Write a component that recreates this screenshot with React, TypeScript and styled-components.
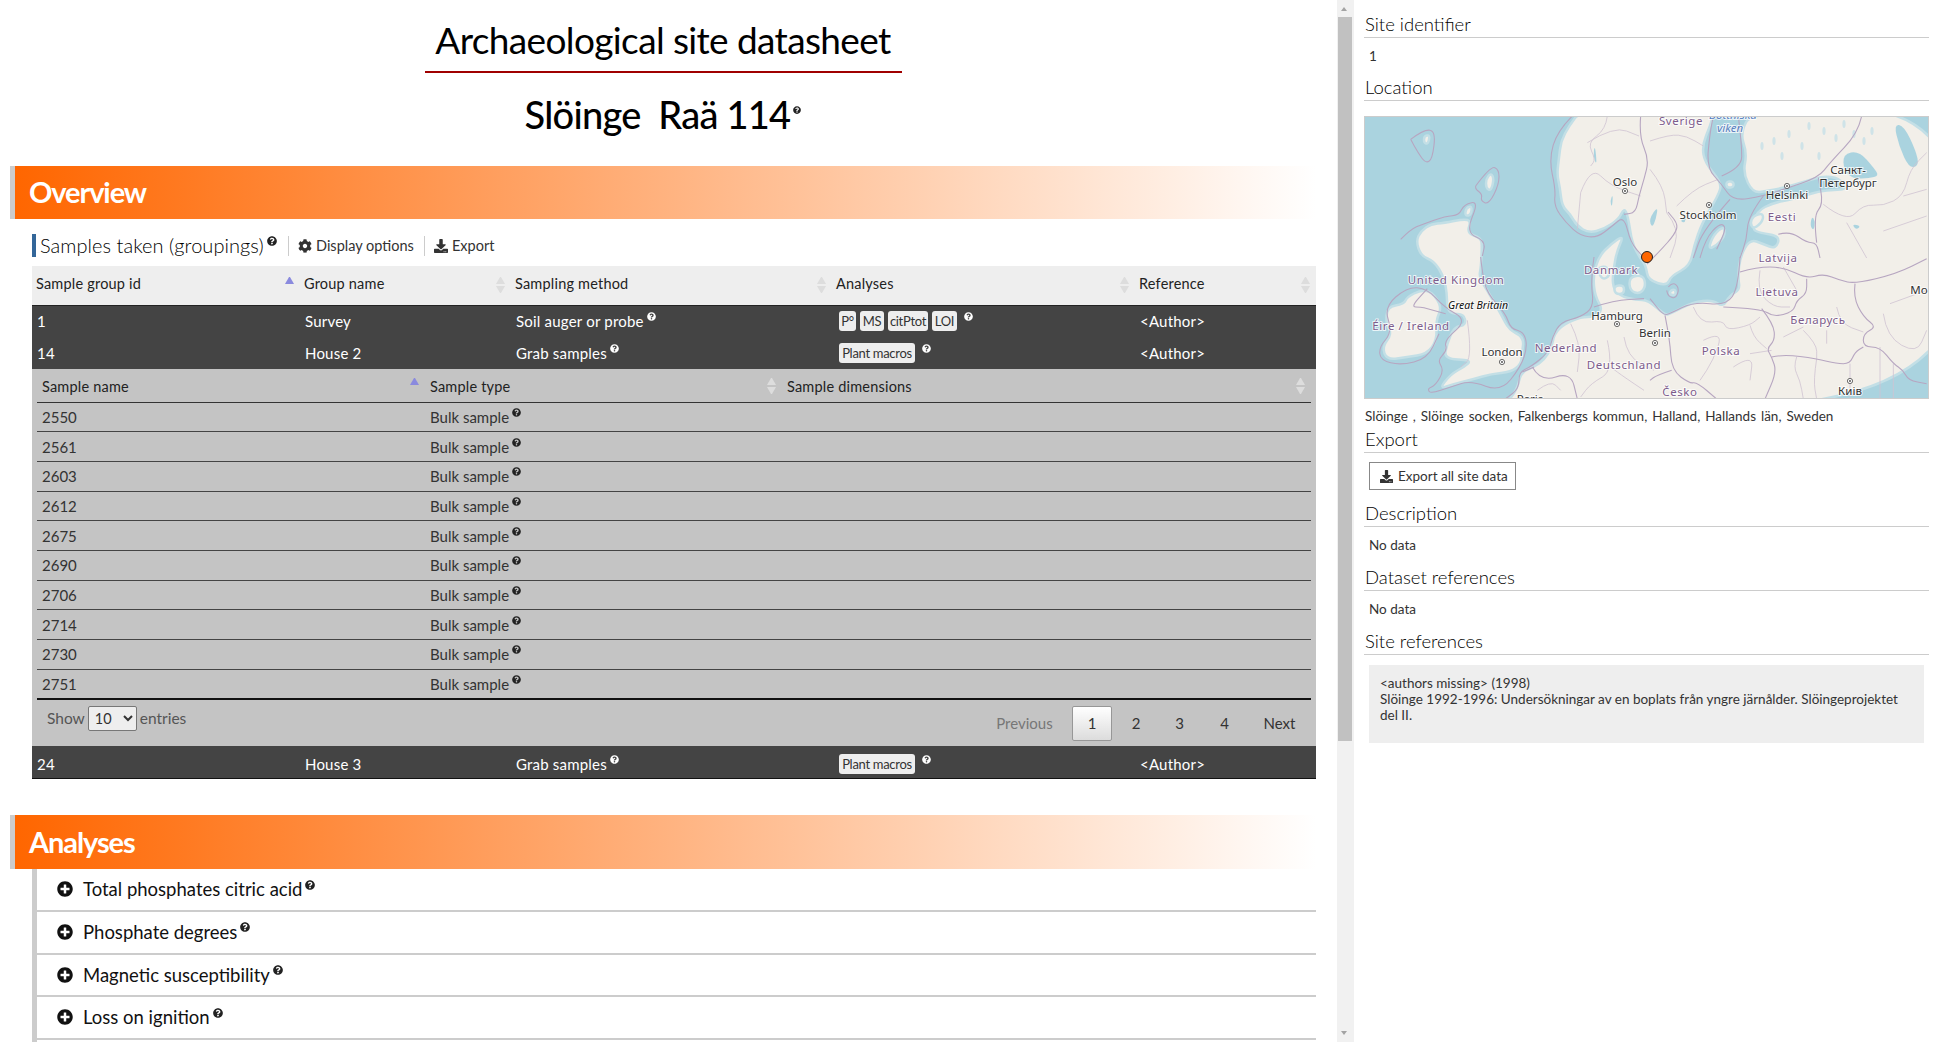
import React from "react";
import styled, { createGlobalStyle } from "styled-components";
import { FaCog, FaDownload, FaPlusCircle, FaQuestionCircle } from "react-icons/fa";

const Global = createGlobalStyle`
  html, body { margin: 0; height: 100%; overflow: hidden; background: #fff; }
  body { font-family: Lato, "Noto Sans", sans-serif; color: #333; }
  * { box-sizing: border-box; }
`;

const Page = styled.div`display: flex; height: 1042px; width: 1937px; overflow: hidden;`;
const LeftPane = styled.main`width: 1337px; height: 100%; overflow: hidden; flex: none;`;
const ScrollBar = styled.div`
  width: 17px; flex: none; height: 100%; background: #f1f1f1; display: flex; flex-direction: column; justify-content: space-between; align-items: flex-start;
`;
const ScrollUp = styled.span`
  width: 0; height: 0; margin: 7px 0 0 3.5px; border: 3.5px solid transparent; border-top: 0; border-bottom: 4px solid #a3a3a3;
`;
const ScrollDown = styled.span`
  width: 0; height: 0; margin: 0 0 7px 3.5px; border: 3.5px solid transparent; border-bottom: 0; border-top: 4px solid #a3a3a3;
`;
const ScrollThumb = styled.div`width: 14px; height: 724px; margin: 6px 0 0 1px; background: #c1c1c1; flex: none;`;
const ScrollTrack = styled.div`flex: 1; width: 100%;`;
const Content = styled.div`
  width: 1306px; margin-left: 10px; height: 1451px; display: flex; flex-direction: column;
`;
const TitleBlock = styled.header`display: flex; flex-direction: column; align-items: center; height: 166px;`;
const Title = styled.h1`
  margin: 0; width: 477px; height: 73px; border-bottom: 2px solid #a00000; text-align: center;
  font-size: 37px; font-weight: 400; line-height: 80px; color: #000; letter-spacing: -0.62px; white-space: nowrap;
`;
const SiteName = styled.h2`
  margin: 17px 0 0; font-size: 38px; font-weight: 500; line-height: 48px; color: #000; letter-spacing: -0.75px; white-space: pre;
  display: flex;
`;
const Info = styled(FaQuestionCircle)<{ $size?: number; $light?: boolean; $top?: number }>`
  width: ${(p) => p.$size ?? 9}px; height: ${(p) => p.$size ?? 9}px;
  color: ${(p) => (p.$light ? "#fff" : "#222")};
  margin-left: 3px; vertical-align: ${(p) => p.$top ?? 6}px;
`;
const NameInfo = styled(Info)`margin-top: 16px;`;
const Band = styled.div<{ $h: number }>`
  height: ${(p) => p.$h}px; border-left: 5px solid #ccc; background: linear-gradient(to right, #ff6600, #fff);
  padding: 0 0 2px 14px; display: flex; align-items: center; color: #fff; font-size: 29px; font-weight: 700; letter-spacing: -1.1px; flex: none;
`;
const Toolbar = styled.div`display: flex; align-items: center; height: 47px; margin-left: 22px; padding: 15px 0 9px;`;
const SectionTitle = styled.div`
  border-left: 4px solid #336699; height: 23px; padding-left: 4px; font-size: 20px; line-height: 22px; font-weight: 300; color: #000; white-space: nowrap; width: 256px; letter-spacing: 0.05px;
`;
const ToolButton = styled.div<{ $w: number }>`
  display: flex; align-items: center; gap: 4px; height: 20px; border-left: 1px solid #ccc; padding-left: 9px; width: ${(p) => p.$w}px;
  font-size: 14.5px; color: #333; white-space: nowrap; svg { width: 14px; height: 14px; color: #333; }
`;
const MainTable = styled.table`
  margin-left: 22px; width: 1284px; border-collapse: collapse; table-layout: fixed; font-size: 15px;
`;
const MainHead = styled.th<{ $w?: number }>`
  width: ${(p) => (p.$w ? p.$w + "px" : "auto")}; height: 39px; background: #eee; border-bottom: 1px solid #222; padding: 0 6px 0 4px;
  font-weight: 400; text-align: left; font-size: 14.5px; color: #222; letter-spacing: 0.2px;
`;
const HeadInner = styled.div`display: flex; align-items: center; justify-content: space-between;`;
const HeadLabel = styled.span<{ $raise?: boolean }>`padding-bottom: ${(p) => (p.$raise ? 3 : 0)}px;`;
const Sort = styled.span<{ $asc?: boolean }>`
  display: flex; flex-direction: column; gap: 2px; width: 9px; flex: none;
  &::before { content: ""; border: 4.5px solid transparent; border-top: 0; border-bottom: 7px solid ${(p) => (p.$asc ? "#8a8ade" : "#ddd")}; }
  &::after { content: ""; border: 4.5px solid transparent; border-bottom: 0; border-top: 7px solid ${(p) => (p.$asc ? "transparent" : "#ddd")}; }
`;
const DarkRow = styled.tr<{ $last?: boolean }>`
  background: #444; color: #fff; height: ${(p) => (p.$last ? 33 : 32)}px;
  ${(p) => p.$last && "border-bottom: 1px solid #111; td { padding-top: 3px; }"}
`;
const DarkCell = styled.td`padding: 0 5px; white-space: nowrap; font-size: 15px; letter-spacing: 0.2px;`;
const Badges = styled.div`display: flex; align-items: flex-start; gap: 4px; margin-left: 2px;`;
const Badge = styled.span<{ $w: number }>`
  display: block; width: ${(p) => p.$w}px; height: 20px; background: #eee; color: #333; border-radius: 3px; font-size: 13px; line-height: 20px; text-align: center; letter-spacing: -0.3px;
`;
const BadgeInfo = styled(Info)`margin: 1px 0 0 3px;`;
const ChildCell = styled.td`background: #c4c4c4; padding: 0;`;
const InnerTable = styled.table`
  width: 1274px; margin-left: 5px; border-collapse: collapse; table-layout: fixed; font-size: 15px;
`;
const InnerHead = styled.th<{ $w?: number }>`
  width: ${(p) => (p.$w ? p.$w + "px" : "auto")}; height: 33px; padding: 2px 6px 0 5px; border-bottom: 1px solid #333;
  font-weight: 400; text-align: left; font-size: 14.5px; color: #222; letter-spacing: 0.2px;
`;
const InnerRow = styled.tr`height: 29.7px;`;
const InnerCell = styled.td<{ $end?: boolean }>`
  padding: 0 5px; border-bottom: ${(p) => (p.$end ? "2px solid #111" : "1px solid #444")}; color: #333; font-size: 15px; letter-spacing: 0;
`;
const TableFooter = styled.div`display: flex; justify-content: space-between; height: 46px; padding: 6px 15.5px 0 15px;`;
const ShowEntries = styled.label`display: flex; align-items: center; gap: 3px; height: 25px; font-size: 15.5px; color: #555;`;
const EntrySelect = styled.select`
  width: 49px; height: 25px; background: #eee; border: 1px solid #777; border-radius: 2px; font: 14.5px Lato, sans-serif; color: #333; padding: 0 0 0 2px;
`;
const Pager = styled.nav`display: flex; align-items: center; height: 35px; font-size: 15px; color: #333;`;
const PageLink = styled.span<{ $muted?: boolean; $w: number }>`
  width: ${(p) => p.$w}px; text-align: center; color: ${(p) => (p.$muted ? "#777" : "#333")};
`;
const NextLink = styled(PageLink)`margin-left: 11.5px;`;
const PageCurrent = styled.span`
  width: 40px; height: 35px; margin-left: 19px; margin-right: 3px; display: flex; align-items: center; justify-content: center; border: 1px solid #979797; border-radius: 2px;
  background: linear-gradient(to bottom, #fff, #dcdcdc);
`;
const Gap = styled.div`height: 36px; flex: none;`;
const AccordionList = styled.section`
  margin-left: 22px; border-left: 5px solid #ccc; flex: 1; display: flex; flex-direction: column;
`;
const AccordionRow = styled.div`
  height: 42.7px; border-bottom: 2px solid #ccc; display: flex; align-items: center; padding: 0 0 1px 20px; flex: none;
  font-size: 18.5px; color: #111; white-space: nowrap;
`;
const Plus = styled(FaPlusCircle)`width: 16px; height: 16px; color: #111; margin-right: 10px; flex: none;`;
const AccordionInfo = styled(Info)`margin: -9px 0 0 3px; width: 10px; height: 10px;`;
const RightPane = styled.aside`flex: 1; padding: 12px 8px 0 10px; min-width: 0;`;
const SideHeading = styled.h3`
  margin: 0; border-bottom: 1px solid #ccc; height: 26px; padding-left: 1px; font-size: 18.5px; line-height: 25px; font-weight: 300; color: #000;
`;
const SideText = styled.div<{ $h: number }>`padding-left: 5px; height: ${(p) => p.$h}px; font-size: 13.5px; line-height: ${(p) => p.$h - 1}px; color: #333;`;
const MapBox = styled.div`margin-top: 15px; height: 283px; border: 1px solid #ccc; background: #aad3df; overflow: hidden; svg { display: block; }`;
const Address = styled.div`font-size: 13.5px; color: #333; height: 28px; padding: 9px 0 0 1px; line-height: 17px; white-space: nowrap; word-spacing: 1.5px;`;
const ExportButton = styled.button`
  margin: 9px 0 11px 5px; width: 147px; height: 28px; display: flex; align-items: center; gap: 5px; padding: 0 0 0 10px; background: #fff; border: 1px solid #888;
  font: 13.5px Lato, sans-serif; color: #333; svg { width: 13px; height: 13px; }
`;
const RefBox = styled.div`margin: 10px 5px 0; height: 78px; background: #eee; padding: 10px 11px; font-size: 13.5px; line-height: 16px; color: #333;`;

const M = { sea: "#aad3df", land: "#f2efe9" };
const smooth = (p: number[], close = false) => {
  const pts: [number, number][] = [];
  for (let i = 0; i < p.length; i += 2) pts.push([p[i], p[i + 1]]);
  const mid = (a: [number, number], b: [number, number]) => `${((a[0] + b[0]) / 2).toFixed(1)} ${((a[1] + b[1]) / 2).toFixed(1)}`;
  if (close) {
    let d = `M${mid(pts[pts.length - 1], pts[0])}`;
    pts.forEach((q, i) => { d += ` Q${q[0]} ${q[1]} ${mid(q, pts[(i + 1) % pts.length])}`; });
    return d + "Z";
  }
  let d = `M${pts[0][0]} ${pts[0][1]}`;
  for (let i = 1; i < pts.length - 1; i++) d += ` Q${pts[i][0]} ${pts[i][1]} ${mid(pts[i], pts[i + 1])}`;
  return d + ` L${pts[pts.length - 1][0]} ${pts[pts.length - 1][1]}`;
};
const frame = (ox: number, oy: number, a: number[]) => a.map((v, i) => (i % 2 === 0 ? ox + v / 3 : oy + v / 3));
const z7 = (a: number[]) => frame(0, 0, a);
const z8 = (a: number[]) => frame(286, 0, a);
const z9 = (a: number[]) => frame(0, 141, a);
const z10 = (a: number[]) => frame(286, 141, a);

const lands = [
  [217, -6, 205, 10, 197, 25, 195, 42, 193, 58, 196, 72, 198, 90, 206, 98, 213, 110, 225, 117, 240, 113, 255, 103, 260, 92, 264, 100, 268, 127, 276, 142, 282, 150, 284, 164, 303, 170, 307, 160, 326, 150, 330, 130, 338, 107, 354, 80, 358, 67, 341, 47, 338, 30, 346, 10, 351, -6],
  [389, -6, 376, 17, 383, 37, 379, 57, 389, 77, 403, 75, 419, 72, 443, 65, 459, 60, 475, 62, 483, 73, 470, 74, 456, 75, 429, 83, 409, 87, 393, 95, 388, 113, 396, 117, 416, 120, 412, 133, 399, 128, 386, 123, 376, 141, 374, 161, 376, 174, 366, 179, 359, 191, 349, 184, 329, 186, 306, 198, 301, 199, 284, 184, 272, 184, 256, 180, 248, 170, 250, 150, 253, 135, 260, 119, 247, 128, 235, 140, 229, 160, 231, 180, 239, 194, 230, 201, 217, 201, 200, 208, 190, 218, 188, 231, 180, 244, 170, 251, 157, 256, 153, 274, 140, 290, 600, 290, 600, -6],
  [80, 107, 100, 103, 107, 105, 103, 117, 117, 122, 118, 130, 117, 151, 115, 161, 123, 174, 137, 198, 145, 214, 160, 221, 158, 238, 157, 248, 147, 256, 127, 258, 110, 263, 90, 268, 75, 273, 87, 258, 100, 251, 108, 244, 80, 243, 83, 228, 90, 211, 102, 209, 100, 198, 87, 198, 83, 191, 83, 178, 80, 161, 70, 145, 57, 140, 52, 125, 57, 115, 67, 108],
  [43, 181, 57, 174, 68, 176, 78, 191, 72, 204, 73, 224, 63, 238, 43, 241, 23, 244, 18, 231, 28, 218, 22, 208, 23, 191, 40, 188],
  [127, 57, 130, 63, 127, 75, 122, 72, 122, 63],
  [102, 92, 108, 90, 107, 99, 101, 100],
  [60, 20, 66, 19, 64, 28, 60, 27],
  [265, 161, 279, 159, 282, 170, 276, 178, 266, 175],
  [250, 170, 260, 169, 260, 178, 251, 178],
  [344, 133, 350, 118, 360, 110, 361, 120, 352, 130],
  [306, 175, 311, 173, 312, 179, 306, 179],
  [389, 100, 399, 97, 399, 105, 390, 113, 386, 108],
  [362, 66, 369, 65, 370, 71, 363, 72],
  [233, 152, 243, 150, 246, 160, 238, 164],
];
const lakes = [
  [479, 38, 495, 35, 510, 52, 515, 60, 505, 62, 490, 63, 480, 55],
  [530, 8, 540, 10, 552, 35, 555, 50, 545, 52, 535, 30],
  [285, 103, 294, 90, 292, 103, 288, 112],
  [316, 105, 322, 100, 321, 107],
  [488, 108, 497, 110, 492, 114],
  [246, 85, 249, 78, 248, 92],
  [229, 40, 231, 28, 233, 50],
  [448, 100, 451, 105, 450, 115, 446, 110],
];
const speckles = [[410, 25], [425, 18], [438, 30], [460, 15], [472, 22], [455, 40], [490, 18], [500, 25], [418, 40], [398, 30], [480, 8], [508, 15], [445, 10]];
const majorLines = [
  z7([140, 70, 180, 40, 215, 45, 205, 130, 185, 142, 162, 110, 140, 70]),
  z7([335, 210, 380, 150, 405, 160, 405, 205, 375, 265, 350, 255, 355, 235, 335, 220, 335, 210]),
  z7([110, 370, 140, 340, 175, 325, 245, 300, 285, 298, 300, 265, 345, 255, 305, 350, 365, 375, 355, 420]),
  z7([625, 0, 580, 45, 555, 130, 575, 220, 570, 270, 605, 320, 650, 360, 700, 365, 745, 330, 780, 300, 800, 380, 835, 420]),
  z7([830, 0, 825, 60, 855, 130, 840, 190, 825, 240, 815, 290, 780, 295]),
  z9([350, 0, 355, 50, 370, 110, 425, 170, 440, 215, 480, 225, 490, 270, 470, 330, 410, 405, 320, 370, 260, 390, 200, 410, 190, 395, 215, 385, 240, 340, 220, 310, 250, 280, 240, 250, 310, 190, 240, 150, 190, 95, 130, 90, 60, 150, 85, 225, 45, 270, 50, 310, 110, 325, 190, 305, 225, 230]),
  z9([690, 0, 680, 70, 690, 150, 650, 180, 590, 195, 565, 240, 555, 285, 500, 330, 465, 345, 465, 395, 425, 425]),
  z9([245, 170, 190, 155, 170, 150, 140, 150, 190, 95]),
  z8([635, 0, 625, 50, 540, 140, 505, 185, 400, 220, 340, 240, 250, 255, 215, 205, 170, 155, 180, 50, 190, 0]),
  z8([215, 180, 275, 155, 275, 90, 265, 0]),
  z8([240, 250, 160, 340, 130, 426]),
  z8([340, 240, 295, 300, 290, 370, 270, 426]),
  z8([385, 355, 420, 345, 470, 380, 500, 380, 510, 426]),
  z8([500, 380, 490, 300, 520, 265, 505, 185]),
  z8([150, 426, 165, 370, 210, 320, 230, 335, 200, 400]),
  z10([270, 0, 265, 90, 230, 145, 130, 135, 60, 170, 40, 175, 0, 125]),
  z10([270, 45, 320, 30, 400, 30, 470, 65, 520, 50, 570, 70, 615, 80, 740, 50, 830, 5]),
  z10([615, 80, 610, 120, 640, 180, 680, 210, 640, 230, 640, 270, 690, 270, 730, 320, 760, 340, 775, 370, 830, 380]),
  z10([365, 300, 400, 292, 500, 305, 560, 320, 600, 320, 615, 285, 640, 270]),
  z10([335, 155, 370, 200, 375, 250, 350, 275, 365, 300, 380, 345, 345, 426]),
  z10([220, 150, 335, 155, 370, 180, 430, 165, 440, 130, 470, 110, 470, 65]),
  z10([45, 175, 60, 250, 65, 340, 120, 380, 140, 375, 200, 426]),
  z10([65, 340, 20, 355, 0, 370]),
  z9([505, 330, 530, 375, 620, 345, 640, 426]),
  z9([475, 345, 510, 330]),
  z9([690, 150, 750, 130, 840, 125]),
  z10([55, 90, 68, 75, 88, 92, 78, 125, 55, 118, 50, 100]),
  [283, 148, 296, 135, 311, 118, 314, 108, 304, 96],
];
const minorLines = [
  z8([0, 75, 60, 55, 110, 60, 160, 90]),
  z8([0, 160, 40, 210, 50, 290]),
  z8([80, 270, 130, 220, 205, 190]),
  z8([50, 290, 90, 340, 60, 426]),
  z8([520, 265, 590, 320, 640, 265, 700, 270, 760, 240, 780, 160, 830, 110]),
  z8([590, 320, 650, 426]),
  z8([700, 345, 830, 300]),
  z8([760, 240, 830, 220]),
  z7([650, 230, 680, 150, 740, 210, 830, 240]),
  z7([670, 80, 750, 30, 825, 60]),
  z7([650, 230, 640, 340]),
  z7([730, 0, 725, 40, 670, 80, 695, 130, 680, 150]),
  z10([130, 150, 150, 200, 220, 190, 230, 220, 300, 205, 330, 180]),
  z10([160, 250, 220, 220, 190, 310, 150, 370]),
  z10([300, 205, 310, 240, 350, 275]),
  z10([300, 290, 365, 280]),
  z10([250, 330, 310, 290, 300, 370]),
  z10([440, 300, 430, 330, 450, 370, 460, 426]),
  z10([500, 305, 490, 370, 500, 426]),
  z10([600, 320, 600, 426]),
  z10([690, 270, 690, 360, 690, 426]),
  z10([730, 320, 730, 426]),
  z10([460, 220, 500, 260, 500, 305]),
  z10([400, 240, 460, 210]),
  z10([530, 220, 530, 260]),
  z10([560, 150, 570, 200, 640, 225]),
  z10([700, 170, 710, 240, 800, 290, 830, 220]),
  z10([720, 140, 830, 100]),
  z10([330, 40, 320, 100, 370, 150, 420, 150]),
  z10([400, 30, 440, 100]),
  z9([620, 200, 650, 260, 640, 345]),
  z9([730, 250, 750, 340, 680, 380, 650, 420]),
  z9([780, 240, 790, 300, 870, 340]),
  z9([840, 400, 780, 360, 740, 330]),
  z9([520, 400, 560, 370, 590, 400]),
  z9([310, 190, 325, 300, 290, 330]),
];

const Place = styled.text<{ $kind?: "country" | "city" | "it" | "sea" }>`
  font-family: "Noto Sans", sans-serif; text-anchor: middle; paint-order: stroke; stroke: rgba(255,255,255,.75); stroke-width: 2px;
  font-size: ${(p) => (p.$kind === "it" ? 10.5 : 11.5)}px;
  font-style: ${(p) => (p.$kind === "it" || p.$kind === "sea" ? "italic" : "normal")};
  fill: ${(p) => (p.$kind === "city" ? "#333" : p.$kind === "it" ? "#111" : p.$kind === "sea" ? "#5a80c0" : "#7d5c8c")};
  letter-spacing: ${(p) => (p.$kind === "country" || !p.$kind ? "0.6px" : "0")};
`;

const labels: [string, number, number, "country" | "city" | "it" | "sea"][] = [
  ["Sverige", 317, 9, "country"], ["Bottniska", 369, 3, "sea"], ["viken", 366, 16, "sea"], ["Oslo", 261, 70, "city"],
  ["Stockholm", 344, 103, "city"], ["Helsinki", 423, 83, "city"], ["Санкт-", 484, 58, "city"], ["Петербург", 484, 71, "city"],
  ["Eesti", 418, 105, "country"], ["Latvija", 414, 146, "country"], ["Lietuva", 413, 180, "country"], ["Mo", 555, 178, "city"],
  ["Беларусь", 454, 208, "country"], ["Polska", 357, 239, "country"], ["Киів", 486, 279, "city"], ["Česko", 316, 280, "country"],
  ["Berlin", 291, 221, "city"], ["Deutschland", 260, 253, "country"], ["Nederland", 202, 236, "country"], ["Hamburg", 253, 204, "city"],
  ["Danmark", 247, 158, "country"], ["United Kingdom", 92, 168, "country"], ["Great Britain", 114, 193, "it"], ["Éire / Ireland", 47, 214, "country"],
  ["London", 138, 240, "city"], ["Paris", 166, 287, "city"],
];
const capitals = [[261, 75], [345, 89], [423, 70], [486, 265], [291, 227], [253, 208], [138, 246]];

const SiteMap = () => (
  <svg width="563" height="281" viewBox="1 1 563 281" aria-label="Map">
    {lands.map((p, i) => <path key={i} d={smooth(p, true)} fill={M.land} stroke="#c3dfe6" strokeWidth="2.5" />)}
    {lakes.map((p, i) => <path key={i} d={smooth(p, true)} fill={M.sea} />)}
    {speckles.map(([x, y]) => <ellipse key={`${x}-${y}`} cx={x} cy={y} rx="1.6" ry="4" fill="#cfe3e8" />)}
    {minorLines.map((p, i) => <path key={i} d={smooth(p)} fill="none" stroke="#cfc3d2" strokeWidth="0.8" />)}
    {majorLines.map((p, i) => <path key={i} d={smooth(p)} fill="none" stroke="#b7a6c1" strokeWidth="1.1" />)}
    {capitals.map(([x, y], i) => (
      <g key={i}>
        <circle cx={x} cy={y} r="2.6" fill="#fff" stroke="#444" strokeWidth="0.8" />
        <circle cx={x} cy={y} r="0.9" fill="#444" />
      </g>
    ))}
    {labels.map(([t, x, y, k]) => <Place key={t} x={x} y={y} $kind={k}>{t}</Place>)}
    <circle cx="283" cy="141" r="5.5" fill="#ff6600" stroke="#222" strokeWidth="1" />
  </svg>
);

const groups = [
  { id: "1", name: "Survey", method: "Soil auger or probe", badges: [["P°", 17], ["MS", 24], ["citPtot", 40], ["LOI", 25]] as [string, number][] },
  { id: "14", name: "House 2", method: "Grab samples", badges: [["Plant macros", 76]] as [string, number][] },
];
const samples = ["2550", "2561", "2603", "2612", "2675", "2690", "2706", "2714", "2730", "2751"];
const analyses = ["Total phosphates citric acid", "Phosphate degrees", "Magnetic susceptibility", "Loss on ignition"];

const Group = ({ id, name, method, badges, last }: { id: string; name: string; method: string; badges: [string, number][]; last?: boolean }) => (
  <DarkRow $last={last}>
    <DarkCell>{id}</DarkCell>
    <DarkCell>{name}</DarkCell>
    <DarkCell>{method}<Info $light /></DarkCell>
    <DarkCell>
      <Badges>
        {badges.map(([b, w]) => <Badge key={b} $w={w}>{b}</Badge>)}
        <BadgeInfo $light />
      </Badges>
    </DarkCell>
    <DarkCell>&lt;Author&gt;</DarkCell>
  </DarkRow>
);

const Head = ({ label, asc, raise }: { label: string; asc?: boolean; raise?: boolean }) => (
  <HeadInner><HeadLabel $raise={raise}>{label}</HeadLabel><Sort $asc={asc} /></HeadInner>
);

export default function App() {
  return (
    <Page>
      <Global />
      <LeftPane>
        <Content>
          <TitleBlock>
            <Title>Archaeological site datasheet</Title>
            <SiteName>Slöinge  Raä 114<NameInfo $size={8} /></SiteName>
          </TitleBlock>
          <Band $h={53}>Overview</Band>
          <Toolbar>
            <SectionTitle>Samples taken (groupings)<Info $size={10} $top={7} /></SectionTitle>
            <ToolButton $w={136}><FaCog />Display options</ToolButton>
            <ToolButton $w={90}><FaDownload />Export</ToolButton>
          </Toolbar>
          <MainTable>
            <thead>
              <tr>
                <MainHead $w={268}><Head label="Sample group id" asc raise /></MainHead>
                <MainHead $w={211}><Head label="Group name" raise /></MainHead>
                <MainHead $w={321}><Head label="Sampling method" raise /></MainHead>
                <MainHead $w={303}><Head label="Analyses" raise /></MainHead>
                <MainHead><Head label="Reference" raise /></MainHead>
              </tr>
            </thead>
            <tbody>
              {groups.map((g) => <Group key={g.id} {...g} />)}
              <tr>
                <ChildCell colSpan={5}>
                  <InnerTable>
                    <thead>
                      <tr>
                        <InnerHead $w={388}><Head label="Sample name" asc /></InnerHead>
                        <InnerHead $w={357}><Head label="Sample type" /></InnerHead>
                        <InnerHead><Head label="Sample dimensions" /></InnerHead>
                      </tr>
                    </thead>
                    <tbody>
                      {samples.map((s, i) => (
                        <InnerRow key={s}>
                          <InnerCell $end={i === samples.length - 1}>{s}</InnerCell>
                          <InnerCell $end={i === samples.length - 1}>Bulk sample<Info /></InnerCell>
                          <InnerCell $end={i === samples.length - 1} />
                        </InnerRow>
                      ))}
                    </tbody>
                  </InnerTable>
                  <TableFooter>
                    <ShowEntries>Show <EntrySelect defaultValue="10"><option>10</option><option>25</option></EntrySelect> entries</ShowEntries>
                    <Pager>
                      <PageLink $muted $w={57}>Previous</PageLink>
                      <PageCurrent>1</PageCurrent>
                      <PageLink $w={42}>2</PageLink>
                      <PageLink $w={45}>3</PageLink>
                      <PageLink $w={45}>4</PageLink>
                      <NextLink $w={42}>Next</NextLink>
                    </Pager>
                  </TableFooter>
                </ChildCell>
              </tr>
              <Group id="24" name="House 3" method="Grab samples" badges={[["Plant macros", 76]]} last />
            </tbody>
          </MainTable>
          <Gap />
          <Band $h={54}>Analyses</Band>
          <AccordionList>
            {analyses.map((a) => <AccordionRow key={a}><Plus />{a}<AccordionInfo /></AccordionRow>)}
          </AccordionList>
        </Content>
      </LeftPane>
      <ScrollBar>
        <ScrollUp />
        <ScrollThumb />
        <ScrollTrack />
        <ScrollDown />
      </ScrollBar>
      <RightPane>
        <SideHeading>Site identifier</SideHeading>
        <SideText $h={37}>1</SideText>
        <SideHeading>Location</SideHeading>
        <MapBox><SiteMap /></MapBox>
        <Address>Slöinge , Slöinge socken,  Falkenbergs kommun,  Halland,  Hallands län, Sweden</Address>
        <SideHeading>Export</SideHeading>
        <ExportButton><FaDownload />Export all site data</ExportButton>
        <SideHeading>Description</SideHeading>
        <SideText $h={38}>No data</SideText>
        <SideHeading>Dataset references</SideHeading>
        <SideText $h={38}>No data</SideText>
        <SideHeading>Site references</SideHeading>
        <RefBox>
          &lt;authors missing&gt; (1998)<br />
          Slöinge 1992-1996: Undersökningar av en boplats från yngre järnålder. Slöingeprojektet del  II.
        </RefBox>
      </RightPane>
    </Page>
  );
}
